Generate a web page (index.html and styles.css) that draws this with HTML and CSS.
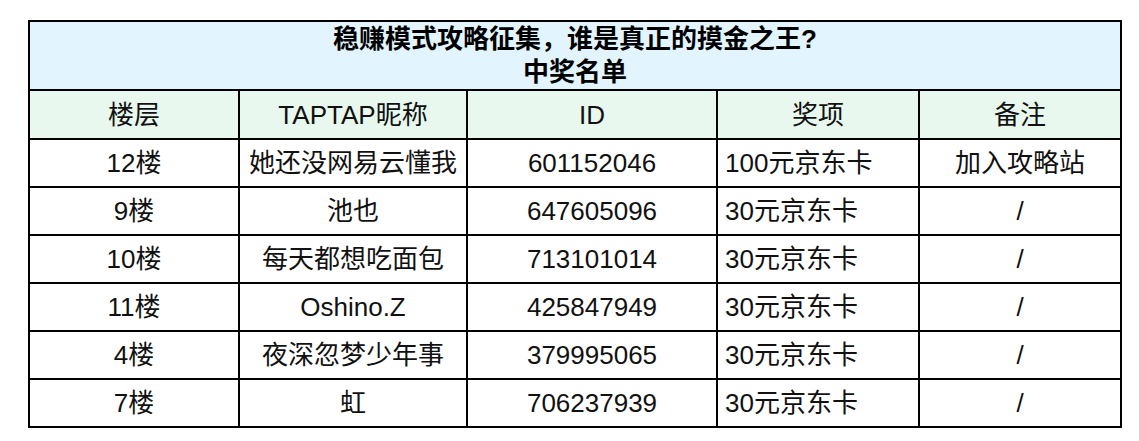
FILE: index.html
```html
<!DOCTYPE html>
<html lang="zh-CN">
<head>
<meta charset="utf-8">
<title>中奖名单</title>
<link rel="stylesheet" href="styles.css">
</head>
<body>
<div class="page">
  <div class="sheet">
    <div class="cell title">稳赚模式攻略征集，谁是真正的摸金之王?<br>中奖名单</div>
    <div class="cell head">楼层</div>
    <div class="cell head">TAPTAP昵称</div>
    <div class="cell head">ID</div>
    <div class="cell head">奖项</div>
    <div class="cell head">备注</div>

    <div class="cell">12楼</div>
    <div class="cell">她还没网易云懂我</div>
    <div class="cell">601152046</div>
    <div class="cell left">100元京东卡</div>
    <div class="cell">加入攻略站</div>

    <div class="cell">9楼</div>
    <div class="cell">池也</div>
    <div class="cell">647605096</div>
    <div class="cell left">30元京东卡</div>
    <div class="cell">/</div>

    <div class="cell">10楼</div>
    <div class="cell">每天都想吃面包</div>
    <div class="cell">713101014</div>
    <div class="cell left">30元京东卡</div>
    <div class="cell">/</div>

    <div class="cell">11楼</div>
    <div class="cell">Oshino.Z</div>
    <div class="cell">425847949</div>
    <div class="cell left">30元京东卡</div>
    <div class="cell">/</div>

    <div class="cell">4楼</div>
    <div class="cell">夜深忽梦少年事</div>
    <div class="cell">379995065</div>
    <div class="cell left">30元京东卡</div>
    <div class="cell">/</div>

    <div class="cell">7楼</div>
    <div class="cell">虹</div>
    <div class="cell">706237939</div>
    <div class="cell left">30元京东卡</div>
    <div class="cell">/</div>
  </div>
</div>
</body>
</html>
```
FILE: styles.css
```css
html, body {
  margin: 0;
  padding: 0;
  background: #ffffff;
}

.page {
  padding: 20px 0 0 28px;
}

.sheet {
  display: grid;
  grid-template-columns: 208px 226px 248px 200px 200px;
  grid-template-rows: 67px 47px repeat(6, 46px);
  gap: 2px;
  padding: 2px;
  width: max-content;
  background: #000000;
  font-family: "Liberation Sans", "Noto Sans CJK SC", sans-serif;
  font-size: 26px;
  color: #111111;
}

.cell {
  background: #ffffff;
  display: flex;
  align-items: center;
  justify-content: center;
  white-space: nowrap;
  line-height: 1;
}

.title {
  grid-column: 1 / -1;
  background: #e2f4fd;
  font-weight: bold;
  line-height: 33px;
  text-align: center;
  color: #000000;
}

.head {
  background: #e8f8ee;
}

.left {
  justify-content: flex-start;
  padding-left: 7px;
}
```
